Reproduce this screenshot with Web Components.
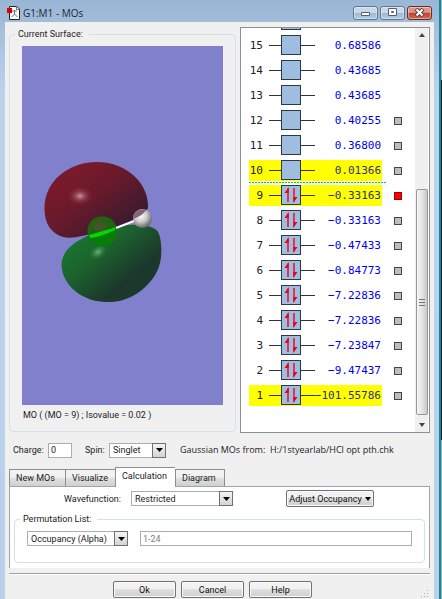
<!DOCTYPE html>
<html lang="en">
<head>
<meta charset="utf-8">
<title>G1:M1 - MOs</title>
<style>
  body {
    margin: 0;
    background: linear-gradient(#b0b8ba 80px, #061618 80px 440px, #a9b0b4 440px);
    color: #222;
    font: 9px/14px Roboto, "Liberation Sans", sans-serif;
  }
</style>
</head>
<body>
<mo-window caption="G1:M1 - MOs">
  <group-box slot="views" label="Current Surface:">
    <surface-view>MO ( (MO = 9) ; Isovalue = 0.02 )</surface-view>
  </group-box>
  <mo-list slot="levels"></mo-list>
  <state-bar slot="state"></state-bar>
  <tab-panel slot="tabs">
    <calculation-form></calculation-form>
  </tab-panel>
  <push-button slot="actions">Ok</push-button>
  <push-button slot="actions">Cancel</push-button>
  <push-button slot="actions">Help</push-button>
</mo-window>

<script>
// Attach an open root and fill it with markup
class BaseElement extends HTMLElement {
  constructor() {
    super();
    this.attachShadow({ mode: 'open' });
  }

  connectedCallback() {
    this.shadowRoot.innerHTML = `
      <style>* { box-sizing: border-box; }</style>
      ${this.render()}
    `;
  }
}

class MoWindow extends BaseElement {
  render() {
    return `
      <style>
        :host {
          display: flex;
          flex-direction: column;
          box-sizing: border-box;
          min-height: 100vh;
          margin-right: 1px;
          padding: 0 5px;
          background: linear-gradient(#9ab6d5, #bbd2eb 90px, #b9d1ea);
          border-right: 2px solid #0c8c98;
        }
        header {
          display: flex;
          align-items: center;
          gap: 3px;
          height: 22px;
          padding: 3px 2px 0;
          color: #1c2733;
          font: 10px/14px "Open Sans", "Noto Sans", sans-serif;
        }
        h1 { flex: 1; margin: 0; font: inherit; }
        .controls { display: flex; gap: 2px; }
        .controls button {
          display: grid;
          place-items: center;
          width: 25px;
          height: 14px;
          padding: 0;
          border: 1px solid #62788f;
          border-radius: 3px;
          background: linear-gradient(#c9d9ea 50%, #9fb8d2 50%, #b3cbe3);
          box-shadow: inset 0 0 0 1px rgba(255, 255, 255, 0.4);
        }
        .controls .close {
          border-color: #6b2a26;
          background: linear-gradient(#dc9688 45%, #bf4231 50%, #cf6a4f);
        }
        main {
          flex: 1;
          display: flex;
          flex-direction: column;
          background: #f0f0f0;
          padding: 5px 4px 0;
        }
        .top {
          display: grid;
          grid-template-columns: minmax(0, 227fr) minmax(0, 190fr);
          gap: 4px;
        }
        footer {
          flex: 1;
          display: flex;
          justify-content: center;
          align-items: flex-start;
          gap: 5px;
          margin-top: 5px;
          padding: 7px 14px 2px 0;
          border-top: 1px solid #a0a0a0;
          box-shadow: inset 0 1px #fff;
          position: relative;
        }
        .grip { position: absolute; right: 1px; bottom: 2px; }
      </style>
      <header>
        <svg width="13" height="14" viewBox="0 0 13 14">
          <path d="M2.500 .5H10L12.500 3V13.500H2.500Z" fill="#fff" stroke="#222"/>
          <path d="M9.500 .5V3.500H12.500M7.500 4V8L4.500 11M7.500 8L10.500 11M5 5H10" fill="none" stroke="#777"/>
          <path d="M0 2H5V7H0Z" fill="#e00000"/>
        </svg>
        <h1>${this.getAttribute('caption')}</h1>
        <div class="controls">
          <button aria-label="Minimize"><svg width="11" height="9"><path d="M1.500 4.500H9.500V7.500H1.500Z" fill="#fff" stroke="#55606c"/></svg></button>
          <button aria-label="Maximize"><svg width="11" height="9"><path d="M1.500 .5H9.500V7.500H1.500Z" fill="#fff" stroke="#55606c"/><path d="M4.500 3.500H6.500V4.500H4.500Z" fill="none" stroke="#55606c"/></svg></button>
          <button class="close" aria-label="Close"><svg width="11" height="9"><path d="M2 1L9 8M9 1L2 8" stroke="#5b4040" stroke-width="4"/><path d="M2.500 1.500L8.500 7.500M8.500 1.500L2.500 7.500" stroke="#fff" stroke-width="2"/></svg></button>
        </div>
      </header>
      <main>
        <div class="top">
          <slot name="views"></slot>
          <slot name="levels"></slot>
        </div>
        <slot name="state"></slot>
        <slot name="tabs"></slot>
        <footer>
          <slot name="actions"></slot>
          <svg class="grip" width="8" height="8"><path d="M6 0h1v1h-1zM6 3h1v1h-1zM3 3h1v1h-1zM6 6h1v1h-1zM3 6h1v1h-1zM0 6h1v1h-1z" fill="#b0b0b0"/></svg>
        </footer>
      </main>
    `;
  }
}

class GroupBox extends BaseElement {
  render() {
    return `
      <style>
        :host { display: block; }
        fieldset {
          min-width: 0;
          margin: 0;
          padding: 0 12px;
          border: 1px solid #d5dfe5;
          border-radius: 4px;
        }
        legend {
          margin-left: -7px;
          padding: 0 6px 0 3px;
        }
      </style>
      <fieldset>
        <legend>${this.getAttribute('label')}</legend>
        <slot></slot>
      </fieldset>
    `;
  }
}

class SurfaceView extends BaseElement {
  render() {
    return `
      <style>
        :host { display: block; padding: 5px 0 9px; }
        svg { display: block; width: 100%; height: auto; background: #8080cc; }
        p { margin: 3px 0 0 1px; }
      </style>
      <svg viewBox="22 46 201 359" role="img" aria-label="Molecular orbital surface">
        <defs>
          <linearGradient id="red" x1="0.1" y1="0.1" x2="0.9" y2="0.9">
            <stop offset="0" stop-color="#801a2b"/>
            <stop offset="0.45" stop-color="#681a2b"/>
            <stop offset="0.85" stop-color="#3f1a2e"/>
          </linearGradient>
          <linearGradient id="green" x1="0.1" y1="0.1" x2="0.85" y2="0.8">
            <stop offset="0" stop-color="#197a2d"/>
            <stop offset="0.4" stop-color="#1c612d"/>
            <stop offset="0.8" stop-color="#1c382c"/>
          </linearGradient>
          <radialGradient id="shine">
            <stop offset="0" stop-color="#d8b3c0" stop-opacity="0.8"/>
            <stop offset="0.5" stop-color="#c07080" stop-opacity="0.3"/>
            <stop offset="1" stop-color="#a02030" stop-opacity="0"/>
          </radialGradient>
          <radialGradient id="glow">
            <stop offset="0" stop-color="#8fd09c" stop-opacity="0.7"/>
            <stop offset="1" stop-color="#2a8a40" stop-opacity="0"/>
          </radialGradient>
          <radialGradient id="ball" cx="0.4" cy="0.35" r="0.65">
            <stop offset="0" stop-color="#fff"/>
            <stop offset="0.5" stop-color="#ccc"/>
            <stop offset="1" stop-color="#666"/>
          </radialGradient>
        </defs>
        <path d="M44.500 209C44 180 70 162 97 162C128 162 149 185 148 207C147 217 118 227 102 231C84 236 72 239 63 237C50 233 44.500 222 44.500 209Z" fill="url(#red)"/>
        <ellipse cx="80" cy="196" rx="13" ry="10" fill="url(#shine)"/>
        <path d="M61.500 266C61 243 92 232 121 226C139 223 155 226 158 232C162 239 162 255 160 263C155 284 132 302 110 302C83 303 63 286 61.500 266Z" fill="url(#green)"/>
        <ellipse cx="98" cy="252" rx="10" ry="7" transform="rotate(-35 98 252)" fill="url(#glow)"/>
        <circle cx="102.500" cy="232" r="14.500" fill="#087c0a"/>
        <path d="M88 235A14.500 14.500 0 0 1 116.500 227L103 232Z" fill="#1f6410"/>
        <ellipse cx="100" cy="226" rx="7" ry="6" fill="#754047" opacity="0.4"/>
        <path d="M89 235L115 227.500V230Q101 237 90 238Z" fill="#05d40a"/>
        <path d="M116 228L134 221" stroke="#fff" stroke-width="2"/>
        <circle cx="142.500" cy="218.500" r="9.500" fill="url(#ball)"/>
        <path d="M133 219A9.500 9.500 0 0 1 146 210Q144 215 133 219Z" fill="#836671"/>
      </svg>
      <p><slot></slot></p>
    `;
  }
}

const LEVELS = [
  { mo: 16 },
  { mo: 15, energy: '0.68586' },
  { mo: 14, energy: '0.43685' },
  { mo: 13, energy: '0.43685' },
  { mo: 12, energy: '0.40255', mark: 'grey' },
  { mo: 11, energy: '0.36800', mark: 'grey' },
  { mo: 10, energy: '0.01366', mark: 'grey', lit: true },
  { mo: 9, energy: '−0.33163', mark: 'red', lit: true },
  { mo: 8, energy: '−0.33163', mark: 'grey' },
  { mo: 7, energy: '−0.47433', mark: 'grey' },
  { mo: 6, energy: '−0.84773', mark: 'grey' },
  { mo: 5, energy: '−7.22836', mark: 'grey' },
  { mo: 4, energy: '−7.22836', mark: 'grey' },
  { mo: 3, energy: '−7.23847', mark: 'grey' },
  { mo: 2, energy: '−9.47437', mark: 'grey' },
  { mo: 1, energy: '−101.55786', mark: 'grey', lit: true }
];

class MoList extends BaseElement {
  render() {
    // The topmost level is scrolled almost out of view, so it carries no text
    const rows = LEVELS.map(level => `
      <li class="${level.lit ? 'lit' : ''} ${level.mo === 10 ? 'lumo' : ''}">
        <div class="level">
          <span class="number">${level.energy ? level.mo : ''}</span>
          <svg class="box" width="46" height="21" viewBox="0 0 46 21">
            <path d="M0 10.500H46" stroke="#333"/>
            <rect x="12.500" y=".5" width="19" height="19" fill="#9fbddf" stroke="#2c3846"/>
            ${level.mo < 10 ? '<path d="M19 17V3.500M25 3V16.500" stroke="#f00019" stroke-width="1.400"/><path d="M19.700 2V8H15.500ZM24.300 18V12H28.500Z" fill="#f00019"/>' : ''}
          </svg>
          <span class="energy">${level.energy || ''}</span>
        </div>
        ${level.mark ? `<i class="${level.mark}"></i>` : ''}
      </li>
    `).join('');
    return `
      <style>
        :host {
          display: grid;
          grid-template-columns: 1fr 13px;
          box-sizing: border-box;
          height: 406px;
          overflow: hidden;
          padding-right: 1px;
          background: #fff;
          border: 1px solid #8b9097;
        }
        ol {
          display: flex;
          flex-direction: column;
          justify-content: flex-end;
          min-width: 0;
          min-height: 0;
          margin: 0;
          padding: 0 0 24px 8px;
          overflow: hidden;
          list-style: none;
          font: 11px/21px "DejaVu Sans Mono", monospace;
        }
        li {
          flex: none;
          display: flex;
          align-items: center;
          gap: 12px;
          height: 25px;
        }
        .level {
          display: flex;
          align-items: center;
          width: 133px;
          height: 21px;
          padding-right: 1px;
        }
        .number { width: 14px; margin-right: 6px; text-align: right; }
        .energy { flex: 1; color: #0000f0; text-align: right; white-space: nowrap; }
        .box { flex: none; margin-right: -2px; }
        .lit .level { background: #ff0; }
        .lit .energy { color: #30307a; }
        .lumo { background: repeating-linear-gradient(90deg, #00e000 0 2px, transparent 2px 3px) 0 100% / 137px 1px no-repeat; }
        i { width: 8px; height: 8px; border: 1px solid #444; background: #bdbdbd; }
        i.red { border-color: #900; background: #f00; }
        .scroll {
          display: flex;
          flex-direction: column;
          align-items: center;
          justify-content: space-between;
          padding: 5px 0;
          background: #f0f0f0;
        }
        .thumb {
          display: grid;
          place-items: center;
          width: 12px;
          height: 226px;
          margin: auto 0 8px;
          border: 1px solid #979797;
          border-radius: 2px;
          background: linear-gradient(90deg, #f5f5f5, #e4e4e4 50%, #c9c9cb);
        }
      </style>
      <ol>${rows}</ol>
      <div class="scroll">
        <svg width="6" height="4"><path d="M0 4L3 0L6 4Z" fill="#444"/></svg>
        <div class="thumb"><svg width="6" height="7"><path d="M0 .5H6M0 3.500H6M0 6.500H6" stroke="#777"/></svg></div>
        <svg width="6" height="4"><path d="M0 0L3 4L6 0Z" fill="#444"/></svg>
      </div>
    `;
  }
}

// Drop-down with the small raised arrow box
class DropDown extends BaseElement {
  render() {
    const value = this.getAttribute('value');
    return `
      <style>
        :host { display: grid; grid-template-columns: 1fr 14px; height: 15px; }
        select {
          grid-area: 1 / 1 / 2 / 3;
          appearance: none;
          width: 100%;
          min-width: 0;
          margin: 0;
          padding: 0 14px 0 3px;
          border: 1px solid #abadb3;
          border-radius: 0;
          background: #fff;
          color: inherit;
          font: inherit;
          line-height: 12px;
        }
        span {
          grid-area: 1 / 2;
          display: grid;
          place-items: center;
          border: 1px solid #707070;
          background: linear-gradient(#f4f4f4, #d4d4d4);
          pointer-events: none;
          z-index: 1;
        }
      </style>
      <select aria-label="${this.getAttribute('label')}"><option>${value}</option></select>
      <span><svg width="7" height="4"><path d="M0 0H7L3.500 4Z" fill="#000"/></svg></span>
    `;
  }
}

class StateBar extends BaseElement {
  render() {
    return `
      <style>
        :host {
          display: flex;
          align-items: center;
          height: 34px;
          padding-left: 4px;
          white-space: nowrap;
        }
        label { width: 35px; }
        input {
          width: 24px;
          height: 15px;
          padding: 0 2px;
          border: 1px solid #abadb3;
          background: #fff;
          color: inherit;
          font: inherit;
        }
        .spin { width: 24px; margin-left: 13px; }
        drop-down { width: 57px; }
        output { margin-left: 14px; font: 9px/14px "Open Sans", "Noto Sans", sans-serif; white-space: pre; }
      </style>
      <label for="charge">Charge:</label>
      <input id="charge" value="0">
      <span class="spin">Spin:</span>
      <drop-down label="Spin" value="Singlet"></drop-down>
      <output>Gaussian MOs from:  H:/1styearlab/HCl opt pth.chk</output>
    `;
  }
}

class TabPanel extends BaseElement {
  render() {
    return `
      <style>
        :host { display: block; }
        nav { display: flex; align-items: flex-end; height: 19px; }
        button {
          width: 50px;
          height: 17px;
          padding: 0 6px;
          border: 1px solid #8c8e94;
          border-width: 1px 0 0 1px;
          background: linear-gradient(#f2f2f2 45%, #e0e0e0 50%, #d0d0d0);
          color: inherit;
          font: inherit;
          text-align: left;
          white-space: nowrap;
        }
        button:first-child { width: 56px; }
        button:last-child { border-right-width: 1px; }
        button[aria-selected="true"] {
          z-index: 1;
          width: 60px;
          height: 20px;
          margin-bottom: -1px;
          padding-bottom: 3px;
          background: #fff;
        }
        section {
          padding: 3px 4px 5px;
          border: 1px solid #a0a3a8;
          border-bottom: 0;
          background: #fff;
        }
      </style>
      <nav role="tablist">
        <button role="tab">New MOs</button>
        <button role="tab">Visualize</button>
        <button role="tab" aria-selected="true">Calculation</button>
        <button role="tab">Diagram</button>
      </nav>
      <section><slot></slot></section>
    `;
  }
}

class CalculationForm extends BaseElement {
  render() {
    return `
      <style>
        :host { display: block; }
        .row { display: flex; align-items: center; height: 17px; padding-left: 50px; margin-bottom: 5px; }
        .row span { width: 67px; }
        .row drop-down { width: 102px; }
        .row push-button { width: 88px; margin: 0 51px 0 auto; }
        .fields { display: flex; gap: 12px; padding: 5px 0 16px; }
        .fields drop-down { width: 101px; }
        input {
          flex: 1;
          min-width: 0;
          height: 15px;
          padding: 0 2px;
          border: 1px solid #abadb3;
          background: #fff;
          color: #808080;
          font: inherit;
        }
      </style>
      <div class="row">
        <span>Wavefunction:</span>
        <drop-down label="Wavefunction" value="Restricted"></drop-down>
        <push-button menu>Adjust Occupancy</push-button>
      </div>
      <group-box label="Permutation List:">
        <div class="fields">
          <drop-down label="Permutation type" value="Occupancy (Alpha)"></drop-down>
          <input value="1-24" aria-label="Permutation list">
        </div>
      </group-box>
    `;
  }
}

class PushButton extends BaseElement {
  render() {
    const arrow = '<svg width="6" height="4"><path d="M0 0H6L3 4Z" fill="#000"/></svg>';
    return `
      <style>
        :host { display: block; width: 63px; }
        button {
          display: flex;
          align-items: center;
          justify-content: center;
          gap: 3px;
          width: 100%;
          height: 17px;
          padding: 0;
          border: 1px solid #707070;
          border-radius: 2px;
          background: linear-gradient(#f2f2f2 45%, #dfdfdf 50%, #cfcfcf);
          box-shadow: inset 0 0 0 1px #fafafa;
          color: #111;
          font: inherit;
          white-space: nowrap;
        }
      </style>
      <button><slot></slot>${this.hasAttribute('menu') ? arrow : ''}</button>
    `;
  }
}

customElements.define('mo-window', MoWindow);
customElements.define('group-box', GroupBox);
customElements.define('surface-view', SurfaceView);
customElements.define('mo-list', MoList);
customElements.define('drop-down', DropDown);
customElements.define('state-bar', StateBar);
customElements.define('tab-panel', TabPanel);
customElements.define('calculation-form', CalculationForm);
customElements.define('push-button', PushButton);
</script>
</body>
</html>
